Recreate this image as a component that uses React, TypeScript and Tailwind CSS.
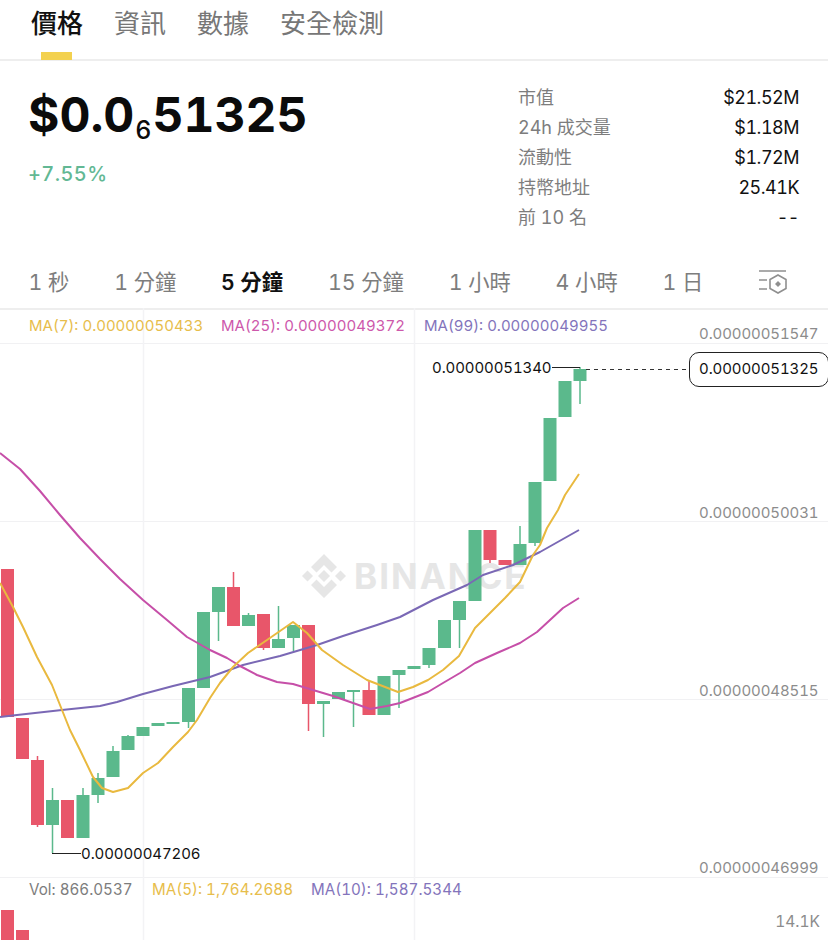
import React from 'react';

const FONT = "Inter, 'Noto Sans CJK TC', sans-serif";
const GREEN = '#5bb98c';
const RED = '#e8566a';

const tabs = ['價格', '資訊', '數據', '安全檢測'];
const stats = [
  ['市值', '$21.52M'],
  ['24h 成交量', '$1.18M'],
  ['流動性', '$1.72M'],
  ['持幣地址', '25.41K'],
  ['前 10 名', '--'],
];
const timeframes = ['1 秒', '1 分鐘', '5 分鐘', '15 分鐘', '1 小時', '4 小時', '1 日'];

// x centre, body top, body bottom, wick top, wick bottom, up?
const candles: [number, number, number, number, number, boolean][] = [
  [7.5, 569, 717, 569, 717, false],
  [22.5, 718, 759, 718, 759, false],
  [37.5, 760, 825, 756, 827, false],
  [52.5, 800, 825, 788, 853, true],
  [67.5, 800, 838, 800, 838, false],
  [83, 795, 838, 788, 838, true],
  [98, 778, 795, 773, 803, true],
  [113, 751, 777, 746, 777, true],
  [128, 736, 750, 735, 750, true],
  [143, 727, 736, 727, 736, true],
  [158, 723, 726, 723, 726, true],
  [173, 722, 724, 722, 724, true],
  [188.5, 688, 722, 688, 728, true],
  [203.5, 612, 688, 612, 688, true],
  [218.5, 587, 612, 587, 641, true],
  [233.5, 587, 626, 572, 626, false],
  [248.5, 615, 626, 613, 626, true],
  [263.5, 614, 648, 614, 650, false],
  [278.5, 639, 648, 606, 648, true],
  [293.5, 625, 638, 625, 651, true],
  [308.5, 625, 704, 625, 731, false],
  [323.5, 701, 704, 701, 737, true],
  [338.5, 692, 699, 692, 699, true],
  [353.5, 690, 691, 690, 727, true],
  [369, 690, 715, 681, 715, false],
  [384, 676, 715, 676, 715, true],
  [399, 670, 675, 670, 708, true],
  [414, 666, 669, 666, 669, true],
  [429, 648, 665, 648, 668, true],
  [444.5, 620, 648, 620, 648, true],
  [459.5, 601, 620, 601, 648, true],
  [475, 530, 601, 530, 601, true],
  [490, 530, 560, 530, 563, false],
  [505, 560, 565, 560, 565, false],
  [520, 544, 565, 526, 565, true],
  [535, 482, 543, 482, 546, true],
  [550, 418, 481, 418, 481, true],
  [565, 381, 417, 381, 417, true],
  [580, 369, 381, 367, 404, true],
];

const ma7 = '0,583 13,607 23,627 37,657 52,685 62,710 70,730 80,750 93,777 102,788 113,792 128,788 143,773 158,763 173,747 188,732 197,720 210,698 220,683 233,667 248,653 267,640 293,622 307,633 322,650 343,665 367,680 398,692 413,687 428,680 443,670 459,656 475,628 490,613 505,598 520,582 533,555 540,545 547,528 558,510 565,495 579,474';
const ma25 = '0,453 20,469 40,491 60,515 80,538 100,559 120,579 143,600 167,620 187,637 210,650 227,658 240,666 257,675 277,682 293,684 313,690 333,696 353,703 370,709 387,706 400,703 428,692 443,683 460,673 475,663 497,653 520,643 537,632 563,608 579,598';
const ma99 = '0,717 17,715 62,710 100,706 117,702 143,694 173,686 210,677 243,665 280,656 317,645 343,636 377,625 400,617 433,600 467,585 483,575 513,565 540,552 579,530';

const axisLabels: [number, string][] = [
  [339, '0.00000051547'],
  [518, '0.00000050031'],
  [696, '0.00000048515'],
  [873, '0.00000046999'],
];

const Logo = () => (
  <g fill="#e6e6e6">
    <path d="M324 554l13 13-5.500 5.500-7.500-7.500-7.500 7.500-5.500-5.500z" />
    <path d="M324 598l-13-13 5.500-5.500 7.500 7.500 7.500-7.500 5.500 5.500z" />
    <path d="M302 576l5.500-5.500 5.500 5.500-5.500 5.500z" />
    <path d="M335 576l5.500-5.500 5.500 5.500-5.500 5.500z" />
    <path d="M324 570l6 6-6 6-6-6z" />
  </g>
);

const Chart = () => (
  <svg className="absolute inset-0" width="828" height="632" viewBox="0 308 828 632" style={{ fontFamily: FONT }}>
    {[343, 521, 699, 877].map((y) => (
      <line key={y} x1="0" x2="828" y1={y + 0.5} y2={y + 0.5} stroke="#f1f1f3" />
    ))}
    {[143, 414].map((x) => (
      <line key={x} x1={x + 0.5} x2={x + 0.5} y1="308" y2="940" stroke="#f3f3f5" strokeWidth="1.5" />
    ))}
    <Logo />
    <text x="354" y="589" fill="#e6e6e6" fontSize="35" fontWeight="700" letterSpacing="2">
      BINANCE
    </text>
    {candles.map(([x, top, bottom, wickTop, wickBottom, up]) => (
      <g key={x} fill={up ? GREEN : RED} stroke="none">
        <rect x={x - 0.75} y={wickTop} width="1.5" height={wickBottom - wickTop} />
        <rect x={x - 6.5} y={top} width="13" height={Math.max(bottom - top, 2)} />
      </g>
    ))}
    <polyline points={ma99} fill="none" stroke="#7a68b5" strokeWidth="2" strokeLinejoin="round" />
    <polyline points={ma25} fill="none" stroke="#c64fa8" strokeWidth="2" strokeLinejoin="round" />
    <polyline points={ma7} fill="none" stroke="#e9b93f" strokeWidth="2" strokeLinejoin="round" />
    <line x1="586" x2="689" y1="369.5" y2="369.5" stroke="#333" strokeDasharray="4 4" />
    <line x1="552" x2="580" y1="367.5" y2="367.5" stroke="#222" />
    <line x1="52" x2="81" y1="853.5" y2="853.5" stroke="#222" />
    <text x="432" y="373" fontSize="15" letterSpacing="-0.1" fill="#111">0.00000051340</text>
    <text x="81" y="859" fontSize="15" letterSpacing="-0.1" fill="#111">0.00000047206</text>
    {axisLabels.map(([y, label]) => (
      <text key={label} x="699" y={y} fontSize="15" letterSpacing="-0.1" fill="#8c8c8c">{label}</text>
    ))}
    <text x="820" y="927" fontSize="15.5" fill="#8c8c8c" textAnchor="end">14.1K</text>
    <rect x="1" y="910" width="13" height="30" fill={RED} />
    <rect x="16" y="930" width="13" height="10" fill={RED} />
  </svg>
);

const SettingsIcon = () => (
  <svg width="28" height="30" viewBox="0 0 28 30" fill="none" stroke="#8f8f8f" strokeWidth="1.6">
    <path d="M0 4h27M0 13h8M0 22h8" />
    <path d="M19 8l8 4.500v9L19 26l-8-4.500v-9z" fill="#fff" />
    <path d="M19 14l3 3-3 3-3-3z" fill="#8f8f8f" stroke="none" />
  </svg>
);

export default function App() {
  return (
    <div className="flex h-[940px] w-[828px] flex-col overflow-hidden bg-white tabular-nums" style={{ fontFamily: FONT }}>
      <div className="flex h-[61px] gap-[31px] border-b-2 border-[#eeeeee] pl-[31px]">
        {tabs.map((tab, i) => (
          <div
            key={tab}
            className={`relative pt-[5px] text-[26px] leading-[38px] ${i === 0 ? 'font-medium text-[#111111]' : 'text-[#777777]'}`}
          >
            {tab}
            {i === 0 && <div className="absolute bottom-[-1px] left-[10px] h-[8px] w-[31px] bg-[#f3d14f]" />}
          </div>
        ))}
      </div>

      <div className="flex h-[200px] justify-between pl-[28px] pr-[29px]">
        <div className="pt-[24px]">
          <div className="flex items-baseline text-[48px] font-bold leading-[60px] text-[#0b0b0b]">
            $0.0
            <span className="w-[18px] translate-y-[7px] text-center text-[25px] font-medium leading-none">6</span>
            <span>51325</span>
          </div>
          <div className="mt-[15px] text-[20px] font-medium leading-[28px] tracking-[0.4px] text-[#62b894]">+7.55%</div>
        </div>
        <div className="w-[281px] pt-[21px]">
          {stats.map(([label, value]) => (
            <div key={label} className="flex h-[30px] items-center justify-between text-[18px]">
              <span className="text-[#7d7d7d]">{label}</span>
              <span className="tracking-[-0.5px] text-[#111111]">{value}</span>
            </div>
          ))}
        </div>
      </div>

      <div className="flex h-[47px] items-start gap-[44.800px] pl-[28.500px] pt-[6px]">
        {timeframes.map((t) => (
          <span key={t} className={`text-[21.300px] leading-[30px] ${t === '5 分鐘' ? 'font-semibold text-[#111111]' : 'text-[#7d7d7d]'}`}>
            {t}
          </span>
        ))}
        <div className="ml-auto mr-[41px]">
          <SettingsIcon />
        </div>
      </div>

      <div className="relative flex-1">
        <div className="absolute inset-x-0 top-0 h-[2px] bg-[#eeeeee]" />
        <Chart />
        <div className="relative flex h-[35px] items-center pl-[29px] pt-[1px] text-[15px]">
          <span className="w-[192px] text-[#e7bd4b]">MA(7): 0.00000050433</span>
          <span className="w-[203px] text-[#cd58ab]">MA(25): 0.00000049372</span>
          <span className="text-[#8374bb]">MA(99): 0.00000049955</span>
        </div>
        <div className="absolute left-[689px] top-[44px] flex h-[35px] w-[140px] items-center rounded-[10px] border border-[#222222] bg-white pl-[9px] text-[15px] tracking-[-0.1px] text-[#111111]">
          0.00000051325
        </div>
        <div className="absolute left-[29px] top-[571px] flex items-center text-[15.200px]">
          <span className="w-[123px] text-[#7d7d7d]">Vol: 866.0537</span>
          <span className="w-[159px] text-[#e7bd4b]">MA(5): 1,764.2688</span>
          <span className="text-[#8374bb]">MA(10): 1,587.5344</span>
        </div>
      </div>
    </div>
  );
}
